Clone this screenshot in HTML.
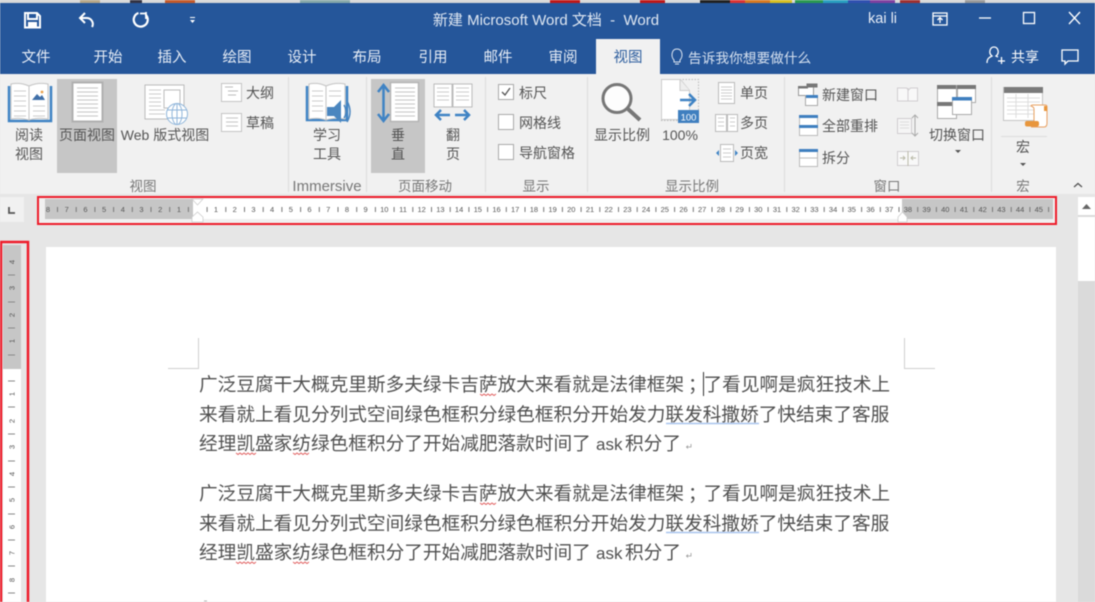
<!DOCTYPE html>
<html><head><meta charset="utf-8"><style>
html,body{margin:0;padding:0;width:1095px;height:602px;overflow:hidden;background:#e6e6e6}
svg{display:block;filter:blur(.5px)}
text{font-family:"Liberation Sans","Noto Sans CJK SC",sans-serif;font-size:14px;fill:#555}
.c{text-anchor:middle}
.tab{fill:#e8eef7;font-size:14.5px;text-anchor:middle}
.grp{fill:#777;font-size:13.5px;text-anchor:middle}
.doc{font-size:18.67px;fill:#505050}
.hr text{font-size:7.5px;text-anchor:middle;fill:#555}
.vr text{font-size:7.5px;text-anchor:middle;fill:#555}
.bl{fill:none;stroke:#3f83c4;stroke-width:2.5}
.w{fill:none;stroke:#fff;stroke-width:2}
</style></head><body>
<svg width="1095" height="602" viewBox="0 0 1095 602" xmlns="http://www.w3.org/2000/svg">
<rect width="1095" height="602" fill="#e6e6e6"/>
<!-- top strip -->
<rect width="1095" height="3" fill="#d8d8d8"/>
<rect x="80" width="20" height="3" fill="#b9a888"/><rect x="130" width="12" height="3" fill="#334"/><rect x="165" width="30" height="3" fill="#c65a2a"/><rect x="300" width="50" height="3" fill="#8aa"/>
<rect x="550" width="30" height="3" fill="#c01818"/><rect x="640" width="25" height="3" fill="#c01818"/><rect x="700" width="30" height="3" fill="#222"/>
<rect x="730" width="15" height="3" fill="#d33"/><rect x="745" width="25" height="3" fill="#d97a20"/><rect x="770" width="22" height="3" fill="#d8c020"/><rect x="795" width="28" height="3" fill="#2a9a50"/><rect x="823" width="25" height="3" fill="#2aa0c0"/><rect x="848" width="22" height="3" fill="#3050b0"/><rect x="870" width="25" height="3" fill="#8040a0"/><rect x="900" width="20" height="3" fill="#a03030"/><rect x="965" width="20" height="3" fill="#999"/>
<!-- blue -->
<rect y="3" width="1095" height="71" fill="#25569a"/>
<!-- ribbon -->
<rect y="74" width="1095" height="120" fill="#f1f1f1"/>
<rect x="596" y="39" width="64" height="36" fill="#f1f1f1"/>
<!-- qat -->
<path d="M25 13h12l3 3v11.500H25zM28 13v6h9v-6" fill="none" stroke="#fff" stroke-width="2"/>
<path d="M28 22h9v5.500H28z" fill="#fff"/>
<path d="M85 13l-5 5 5 5M80 18h7a6 6 0 0 1 5 9" class="w"/>
<path d="M145.500 14.500a7 7 0 1 1-7-1.500" fill="none" stroke="#fff" stroke-width="2.200"/>
<path d="M146 12v7M146 13.500h-6" fill="none" stroke="#fff" stroke-width="1.800"/>
<path d="M190 17h5v1h-5zM190 20h5l-2.500 3z" fill="#fff"/>
<text x="546" y="25" class="c" style="fill:#dfe7f2;font-size:15px">新建 Microsoft Word 文档 &#160;-&#160; Word</text>
<text x="868" y="23" style="fill:#e8eef7;font-size:14.500px">kai li</text>
<path d="M933 13h14v12h-14zM933 16h14M940 23v-5M937.500 20l2.500-2.500 2.500 2.500" fill="none" stroke="#fff" stroke-width="1.300"/>
<path d="M979 18h12" stroke="#fff" stroke-width="1.300"/>
<rect x="1023.500" y="12.500" width="11" height="11" fill="none" stroke="#fff" stroke-width="1.300"/>
<path d="M1069 12l11 12M1080 12l-11 12" stroke="#fff" stroke-width="1.300"/>
<!-- tabs -->
<text x="36" y="62" class="tab">文件</text><text x="108" y="62" class="tab">开始</text><text x="172" y="62" class="tab">插入</text><text x="237" y="62" class="tab">绘图</text><text x="302" y="62" class="tab">设计</text><text x="367" y="62" class="tab">布局</text><text x="433" y="62" class="tab">引用</text><text x="498" y="62" class="tab">邮件</text><text x="563" y="62" class="tab">审阅</text>
<text x="628" y="62" class="tab" style="fill:#2f5f9f">视图</text>
<path d="M674 60c-3-3-3-11 3-11s6 8 3 11v2h-6zM675 64h4" fill="none" stroke="#dfe7f2" stroke-width="1"/>
<text x="688" y="63" style="fill:#d5e0ef;font-size:13.7px">告诉我你想要做什么</text>
<path d="M987 63c0-5 3-6 5-7-4-3-2-9 2-9s6 6 2 9l2 1M998 61h7M1001.500 57v7" fill="none" stroke="#fff" stroke-width="1.300"/>
<text x="1011" y="62" style="fill:#fff;font-size:14px">共享</text>
<path d="M1062 50h16v11h-10l-3 3v-3h-3z" fill="none" stroke="#fff" stroke-width="1.300"/>
<!-- separators -->
<path d="M288.500 77V192M366.500 77V192M485.500 77V192M587.500 77V192M784.500 77V192M991.500 77V192" stroke="#dcdcdc" stroke-width="1"/>
<!-- highlights -->
<rect x="57" y="79" width="60" height="94" fill="#c6c6c6"/>
<rect x="371" y="79" width="54" height="94" fill="#c6c6c6"/>
<!-- read view icon -->
<path d="M9 86v35h42V86" fill="none" stroke="#3f83c4" stroke-width="2.500"/>
<path d="M11 84q9-2 18 2v34q-9-3-18-1zM29 86q9-4 19-2v35q-10-2-19 1z" fill="#fff" stroke="#c4c4c4"/>
<path d="M14 91h12M14 96h12M14 101h12M14 106h12M14 111h12M14 116h12M33 106h12M33 111h12M33 116h12" stroke="#ccc"/>
<path d="M32 100l5-6 3 3 2-2 3 5z" fill="#3f6fa8"/><circle cx="42" cy="92" r="1.400" fill="#e9a04a"/>
<!-- page view -->
<rect x="72.500" y="82.500" width="30" height="39" fill="#fff" stroke="#b0b0b0" stroke-width="2"/>
<path d="M77 88h21M77 92h21M77 96h21M77 100h21M77 104h21M77 108h21M77 112h21M77 116h21" stroke="#c4c4c4"/>
<!-- web icon -->
<rect x="145" y="85" width="39" height="34" fill="#fff" stroke="#bbb"/>
<rect x="164" y="90" width="16" height="18" fill="#fff" stroke="#bbb"/>
<path d="M149 90h12M149 94h12M149 98h12M149 102h12M149 106h12M149 110h16M149 114h16" stroke="#ccc"/>
<circle cx="177" cy="114" r="10.500" fill="#fff" stroke="#8fb5da" stroke-width="1"/>
<ellipse cx="177" cy="114" rx="5" ry="10.500" fill="none" stroke="#8fb5da"/>
<path d="M177 103.500v21M167 110h20M167 118h20" stroke="#8fb5da"/>
<!-- outline, draft -->
<rect x="221.500" y="83.500" width="20" height="18" fill="#fff" stroke="#c4c4c4"/>
<path d="M225 87h8M228 91h10M228 95h8" stroke="#bbb"/>
<rect x="221.500" y="113.500" width="20" height="18" fill="#fff" stroke="#c4c4c4"/>
<path d="M226 118h12M226 122h12M226 126h12" stroke="#c4c4c4"/>
<!-- learn tools -->
<path d="M307 86v34h40V86" fill="none" stroke="#3f83c4" stroke-width="2.500"/>
<path d="M309 84q9-2 17 2v34q-8-3-17-1zM326 86q9-4 19-2v35q-10-2-19 1z" fill="#fff" stroke="#c4c4c4"/>
<path d="M312 91h11M312 96h11M312 101h11M312 106h11M312 111h11M329 91h12M329 96h12" stroke="#ccc"/>
<path d="M327 107h7l7-7v23l-7-7h-7z" fill="#4a86bf"/>
<path d="M344 105q4 7 0 13M347 101q6 11 0 21" fill="none" stroke="#4a86bf" stroke-width="1.500"/>
<!-- vertical -->
<rect x="390.500" y="82.500" width="28" height="39" fill="#fff" stroke="#b5b5b5" stroke-width="1.500"/>
<path d="M395 88h20M395 92h20M395 96h20M395 100h20M395 104h20M395 108h20M395 112h20M395 116h20" stroke="#c4c4c4"/>
<path d="M383.500 86v34M378 92l5.500-7 5.500 7M378 114l5.500 7 5.500-7" class="bl"/>
<!-- page flip -->
<rect x="434" y="84" width="18" height="23" fill="#fff" stroke="#bbb"/><rect x="453" y="84" width="19" height="23" fill="#fff" stroke="#bbb"/>
<path d="M437 88h12M437 92h12M437 96h12M437 100h12M456 88h13M456 92h13M456 96h13M456 100h13" stroke="#ccc"/>
<path d="M436 115h14M441 110l-5 5 5 5M455 115h14M464 110l5 5-5 5" class="bl"/>
<!-- checkboxes -->
<rect x="498.500" y="84.500" width="15" height="15" fill="#fff" stroke="#aaa"/>
<path d="M502 92l3 3 5-7" fill="none" stroke="#555" stroke-width="1.300"/>
<rect x="498.500" y="114.500" width="15" height="15" fill="#fff" stroke="#aaa"/>
<rect x="498.500" y="144.500" width="15" height="15" fill="#fff" stroke="#aaa"/>
<!-- zoom -->
<circle cx="617" cy="98.500" r="14" fill="#fdfdfd" stroke="#777" stroke-width="3"/>
<path d="M628 109l12 11" stroke="#777" stroke-width="4"/>
<!-- 100 -->
<rect x="661.500" y="79.500" width="37" height="41" fill="none" stroke="#bbb" stroke-dasharray="1.500 1.500"/>
<path d="M661.500 79.500h19l9 11v29h-28z" fill="#fff" stroke="#ccc"/>
<path d="M680 79.500v11h9.500" fill="#eee" stroke="#ccc"/>
<path d="M680 100h15M689 94l6 6-6 6" class="bl"/>
<rect x="678" y="110" width="21" height="13" fill="#3f7fbf"/>
<text x="688.500" y="120.500" class="c" style="fill:#fff;font-size:9.500px">100</text>
<!-- one/multi/width -->
<rect x="718.500" y="82.500" width="16" height="21" fill="#fff" stroke="#bbb"/><path d="M721 87h11M721 90h11M721 93h11M721 96h11M721 99h11" stroke="#ccc"/>
<rect x="715.500" y="114.500" width="11" height="17" fill="#fff" stroke="#bbb"/><rect x="727.500" y="114.500" width="10" height="17" fill="#fff" stroke="#bbb"/><path d="M718 118h6M718 122h6M718 126h6M730 118h5M730 122h5M730 126h5" stroke="#ccc"/>
<rect x="720.500" y="144.500" width="13" height="17" fill="#fff" stroke="#bbb"/><path d="M723 149h8M723 153h8M723 157h8" stroke="#ccc"/>
<path d="M719 150v6l-3-3zM735 150v6l3-3z" fill="#3f83c4"/>
<!-- window icons -->
<rect x="798.500" y="86.500" width="15" height="9" fill="#fff" stroke="#999"/><rect x="806.500" y="83.500" width="11" height="4" fill="#777"/>
<rect x="805.500" y="95.500" width="12" height="10" fill="#fff" stroke="#aaa"/><rect x="806" y="95" width="12" height="3" fill="#3f7fbf"/><rect x="798" y="86" width="10" height="2.500" fill="#777"/>
<rect x="799.500" y="115.500" width="18" height="20" fill="#fff" stroke="#bbb"/><rect x="799" y="115" width="19" height="3" fill="#3f7fbf"/><rect x="799" y="125" width="19" height="3" fill="#3f7fbf"/>
<rect x="799.500" y="149.500" width="18" height="17" fill="#fff" stroke="#bbb"/><rect x="799" y="149" width="19" height="3" fill="#3f7fbf"/><path d="M800 158h17" stroke="#bbb"/>
<path d="M897.500 88h9l2 2 2-2h7v13h-20z" fill="#f8f8f8" stroke="#d0cdd0"/><path d="M908 88v13" stroke="#d0cdd0"/>
<rect x="897.500" y="118.500" width="14" height="15" fill="#f5f5f5" stroke="#d0cdd0"/><path d="M900 122h9M900 125h9M900 128h9" stroke="#ddd"/>
<path d="M915 115v21M912 118l3-3 3 3M912 133l3 3 3-3" fill="none" stroke="#aaa"/>
<rect x="897.500" y="151.500" width="21" height="14" fill="#f8f8f8" stroke="#d0cdd0"/><path d="M908 151v15M900 158h5M903 156l2 2-2 2M916 158h-5M913 156l-2 2 2 2" fill="none" stroke="#bba"/>
<!-- switch -->
<rect x="937.500" y="85.500" width="19" height="17" fill="#fff" stroke="#aaa"/><rect x="937" y="85" width="19" height="4" fill="#777"/>
<rect x="957.500" y="85.500" width="18" height="17" fill="#fff" stroke="#aaa"/><rect x="957" y="85" width="19" height="4" fill="#777"/>
<rect x="937.500" y="103.500" width="19" height="15" fill="#fff" stroke="#aaa"/><rect x="937" y="102" width="19" height="4" fill="#777"/>
<rect x="952.500" y="97.500" width="19" height="17" fill="#fff" stroke="#aaa"/><rect x="952" y="97" width="20" height="3.500" fill="#3f7fbf"/>
<path d="M955 150h6l-3 3z" fill="#555"/>
<!-- macro -->
<rect x="1003.500" y="87.500" width="39" height="33" fill="#fff" stroke="#c4c4c4"/><rect x="1004" y="87" width="39" height="6" fill="#7a7a7a"/>
<path d="M1007 98h33M1007 102h33M1007 106h33M1007 110h33M1007 114h33M1016 94v24M1028 94v24" stroke="#ddd"/>
<path d="M1031 106q0-1 2-1h12q2 0 2 2v16q0 4-3 4h-13q3-1 3-4v-14q0-2-3-3z" fill="#fff" stroke="#e8a060"/>
<rect x="1025" y="121" width="14" height="5.500" rx="2" fill="#e8963c"/><rect x="1044" y="106" width="3" height="5" fill="#e8963c"/>
<path d="M1001 136.500h46" stroke="#ddd"/>
<path d="M1020 163h6l-3 3z" fill="#555"/>
<path d="M1074 187l4-3.500 4 3.500" fill="none" stroke="#555" stroke-width="1.300"/>
<!-- ribbon labels -->
<text x="29" y="140" class="c">阅读</text><text x="29" y="159" class="c">视图</text>
<text x="87" y="140" class="c">页面视图</text>
<text x="165" y="140" class="c">Web 版式视图</text>
<text x="246" y="98">大纲</text><text x="246" y="128">草稿</text>
<text x="327" y="140" class="c">学习</text><text x="327" y="159" class="c">工具</text>
<text x="398" y="140" class="c">垂</text><text x="398" y="159" class="c">直</text>
<text x="453" y="140" class="c">翻</text><text x="453" y="159" class="c">页</text>
<text x="519" y="98">标尺</text><text x="519" y="128">网格线</text><text x="519" y="158">导航窗格</text>
<text x="622" y="140" class="c">显示比例</text><text x="680" y="140" class="c">100%</text>
<text x="740" y="98">单页</text><text x="740" y="128">多页</text><text x="740" y="158">页宽</text>
<text x="822" y="100">新建窗口</text><text x="822" y="131">全部重排</text><text x="822" y="163">拆分</text>
<text x="957" y="140" class="c">切换窗口</text><text x="1023" y="152" class="c">宏</text>
<text x="143" y="191" class="grp">视图</text><text x="327" y="191" class="grp" style="font-size:15px">Immersive</text><text x="425" y="191" class="grp">页面移动</text><text x="536" y="191" class="grp">显示</text><text x="692" y="191" class="grp">显示比例</text><text x="887" y="191" class="grp">窗口</text><text x="1023" y="191" class="grp">宏</text>
<!-- corner L -->
<rect x="0" y="197" width="24" height="25" fill="#f1f1f1"/>
<path d="M9 207v6h6" fill="none" stroke="#555" stroke-width="1.800"/>
<!-- horizontal ruler -->
<rect x="38" y="197" width="1018" height="27" fill="#f0f0f0" stroke="#ee1c2a" stroke-width="2"/>
<rect x="45" y="199" width="148" height="20" fill="#c6c6c6"/>
<rect x="193" y="199" width="709" height="20" fill="#fff"/>
<rect x="902" y="199" width="151" height="20" fill="#c6c6c6"/>
<path d="M57 209.500H1050" stroke="#777" stroke-width="5" stroke-dasharray="1 17.700"/>
<g class="hr" transform="translate(0,212)">
<text x="48">8</text><text x="66.700">7</text><text x="85.400">6</text><text x="104.100">5</text><text x="122.800">4</text><text x="141.500">3</text><text x="160.200">2</text><text x="178.900">1</text>
<text x="216">1</text><text x="234.700">2</text><text x="253.400">3</text><text x="272.100">4</text><text x="290.800">5</text><text x="309.500">6</text><text x="328.200">7</text><text x="346.900">8</text><text x="365.600">9</text><text x="384.300">10</text><text x="403">11</text><text x="421.700">12</text><text x="440.400">13</text><text x="459.100">14</text><text x="477.800">15</text><text x="496.500">16</text><text x="515.200">17</text><text x="533.900">18</text><text x="552.600">19</text><text x="571.300">20</text><text x="590">21</text><text x="608.700">22</text><text x="627.400">23</text><text x="646.100">24</text><text x="664.800">25</text><text x="683.500">26</text><text x="702.200">27</text><text x="720.900">28</text><text x="739.600">29</text><text x="758.300">30</text><text x="777">31</text><text x="795.700">32</text><text x="814.400">33</text><text x="833.100">34</text><text x="851.800">35</text><text x="870.500">36</text><text x="889.200">37</text><text x="907.900">38</text><text x="926.600">39</text><text x="945.300">40</text><text x="964">41</text><text x="982.700">42</text><text x="1001.400">43</text><text x="1020.100">44</text><text x="1038.800">45</text>
</g>
<path d="M192 199h11l-5.500 6zM192 222v-5l5.500-5 5.500 5v5zM898 222v-5l4.500-5 4.500 5v5z" fill="#fff" stroke="#c9c9c9" stroke-width=".7"/>
<!-- vertical ruler -->
<rect x="1" y="242" width="27" height="370" fill="#e6e6e6" stroke="#ee1c2a" stroke-width="2.500"/>
<rect x="3" y="245" width="18" height="124" fill="#c6c6c6"/>
<rect x="3" y="369" width="18" height="233" fill="#fff"/>
<path d="M8 275h7M8 302h7M8 328h7M8 355h7M8 381h7M8 407h7M8 434h7M8 461h7M8 487h7M8 514h7M8 540h7M8 566h7M8 593h7" stroke="#888"/>
<g class="vr">
<text transform="translate(14.500,262) rotate(-90)">4</text><text transform="translate(14.500,288) rotate(-90)">3</text><text transform="translate(14.500,315) rotate(-90)">2</text><text transform="translate(14.500,341) rotate(-90)">1</text><text transform="translate(14.500,394) rotate(-90)">1</text><text transform="translate(14.500,421) rotate(-90)">2</text><text transform="translate(14.500,447) rotate(-90)">3</text><text transform="translate(14.500,474) rotate(-90)">4</text><text transform="translate(14.500,500) rotate(-90)">5</text><text transform="translate(14.500,527) rotate(-90)">6</text><text transform="translate(14.500,553) rotate(-90)">7</text><text transform="translate(14.500,580) rotate(-90)">8</text>
</g>
<!-- scrollbar -->
<rect x="1078" y="197" width="17" height="405" fill="#dadada"/>
<rect x="1078" y="197" width="17" height="18" fill="#fff"/>
<rect x="1078" y="217" width="17" height="64" fill="#fff"/>
<path d="M1082 209l4.500-5 4.500 5z" fill="#666"/>
<!-- page -->
<rect x="46" y="247" width="1010" height="355" fill="#fff"/>
<path d="M168 368.500h30.500V338M935 368.500h-30.500V338" fill="none" stroke="#cfcfcf"/>
<!-- document text -->
<text class="doc" x="199" y="391">广泛豆腐干大概克里斯多夫绿卡吉萨放大来看就是法律框架<tspan x="688">；</tspan><tspan x="703.500">了看见啊是疯狂技术上</tspan></text>
<text class="doc" x="199" y="421">来看就上看见分列式空间绿色框积分绿色框积分开始发力联发科撒娇了快结束了客服</text>
<text class="doc" x="199" y="450">经理凯盛家纺绿色框积分了开始减肥落款时间了<tspan x="596" style="font-size:17px">ask</tspan><tspan x="625">积分了</tspan></text>
<text class="doc" x="199" y="500">广泛豆腐干大概克里斯多夫绿卡吉萨放大来看就是法律框架<tspan x="688">；</tspan><tspan x="703.500">了看见啊是疯狂技术上</tspan></text>
<text class="doc" x="199" y="530">来看就上看见分列式空间绿色框积分绿色框积分开始发力联发科撒娇了快结束了客服</text>
<text class="doc" x="199" y="559">经理凯盛家纺绿色框积分了开始减肥落款时间了<tspan x="596" style="font-size:17px">ask</tspan><tspan x="625">积分了</tspan></text>
<path d="M703.500 372v24" stroke="#333" stroke-width="1"/>
<path d="M666 423.500h93M666 532.500h93" stroke="#a9c4ee" stroke-width="1.500"/>
<g fill="none" stroke="#e06060" stroke-width="1"><path d="M236 453l2 1.500 2-1.500 2 1.500 2-1.500 2 1.500 2-1.500 2 1.500 2-1.500 2 1.500 2-1.500M293 453l2 1.500 2-1.500 2 1.500 2-1.500 2 1.500 2-1.500 2 1.500 2-1.500M236 562l2 1.500 2-1.500 2 1.500 2-1.500 2 1.500 2-1.500 2 1.500 2-1.500 2 1.500 2-1.500M293 562l2 1.500 2-1.500 2 1.500 2-1.500 2 1.500 2-1.500 2 1.500 2-1.500M480 394l2 1.500 2-1.500 2 1.500 2-1.500 2 1.500 2-1.500 2 1.500 2-1.500M480 503l2 1.500 2-1.500 2 1.500 2-1.500 2 1.500 2-1.500 2 1.500 2-1.500"/></g>
<path d="M691 444v3h-4M688 445.500l-1.500 1.500 1.500 1.500M691 553v3h-4M688 554.500l-1.500 1.500 1.500 1.500M207 601h-3" fill="none" stroke="#999" stroke-width=".8"/>
</svg>
</body></html>
